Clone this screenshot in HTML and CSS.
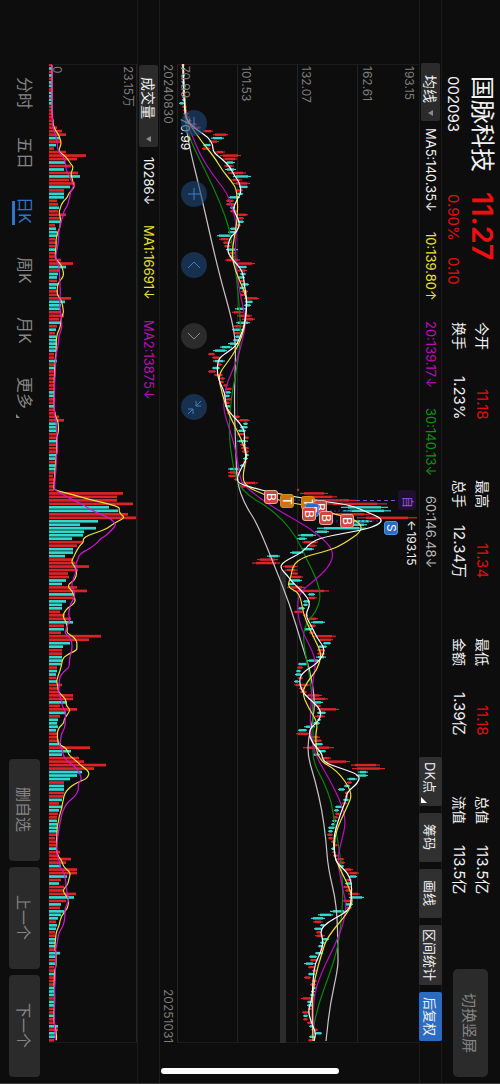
FILE: index.html
```html
<!DOCTYPE html>
<html lang="zh-CN">
	<head>
		<meta charset="UTF-8">
		<meta name="viewport" content="width=device-width, initial-scale=1">
		<title>国脉科技 002093</title>
		<link rel="stylesheet" href="styles.css">
	</head>
	<body>
		<div class="screen">
			<!--股票信息-->
			<header class="header">
				<div class="stock">
					<h1>国脉科技</h1>
					<strong class="price">11.27</strong>
					<span class="code">002093</span>
					<span class="change"><span>0.90%</span><span>0.10</span></span>
				</div>
				<div class="quotes">
					<dl><dt>今开</dt><dd class="up">11.18</dd><dt>换手</dt><dd>1.23%</dd></dl>
					<dl><dt>最高</dt><dd class="up">11.34</dd><dt>总手</dt><dd>12.34万</dd></dl>
					<dl><dt>最低</dt><dd class="up">11.18</dd><dt>金额</dt><dd>1.39亿</dd></dl>
					<dl><dt>总值</dt><dd>113.5亿</dd><dt>流值</dt><dd>113.5亿</dd></dl>
				</div>
				<button class="switch" type="button">切换竖屏</button>
			</header>

			<!--均线工具栏-->
			<div class="bar">
				<label class="pick">
					<select aria-label="主图指标"><option>均线</option></select>
				</label>
				<ul class="values">
					<li class="ma5">MA5:140.35↓</li>
					<li class="ma10">10:139.80↑</li>
					<li class="ma20">20:139.17↓</li>
					<li class="ma30">30:140.13↓</li>
					<li class="ma60">60:146.48↓</li>
				</ul>
				<div class="tools">
					<button type="button" class="more">DK点</button>
					<button type="button">筹码</button>
					<button type="button">画线</button>
					<button type="button" class="wide">区间统计</button>
					<button type="button" class="on">后复权</button>
				</div>
			</div>

			<!--K线-->
			<section class="kline">
				<div class="canvas" id="kline">
					<svg id="priceSvg" viewBox="177 64 242 979" preserveAspectRatio="none"></svg>
					<span class="scale s1">193.15</span>
					<span class="scale s2">162.61</span>
					<span class="scale s3">132.07</span>
					<span class="scale s4">101.53</span>
					<span class="scale s5">70.99</span>
					<span class="high">←193.15</span>
					<span class="low">70.99</span>
				</div>
				<div class="dates"><time>20240830</time><time>20251031</time></div>
				<div class="controls">
					<button type="button" aria-label="缩小"><svg viewBox="0 0 26 26"><path d="M13 7V19"/></svg></button>
					<button type="button" aria-label="放大"><svg viewBox="0 0 26 26"><path d="M13 7V19M7 13H19"/></svg></button>
					<button type="button" aria-label="向左"><svg viewBox="0 0 26 26"><path d="M7 16L13 10L19 16"/></svg></button>
					<button type="button" aria-label="向右" class="off"><svg viewBox="0 0 26 26"><path d="M7 10L13 16L19 10"/></svg></button>
					<button type="button" aria-label="收起"><svg viewBox="0 0 26 26"><path d="M20 7L15 12M15 7V12H20M7 20L12 15M7 15H12V20"/></svg></button>
				</div>
			</section>

			<!--成交量-->
			<div class="bar">
				<label class="pick vol">
					<select aria-label="副图指标"><option>成交量</option></select>
				</label>
				<ul class="values vol">
					<li class="ma5">10286↓</li>
					<li class="ma10">MA1:16691↓</li>
					<li class="ma20">MA2:13875↓</li>
				</ul>
			</div>
			<section class="volume">
				<svg id="volSvg" viewBox="49 64 88 979" preserveAspectRatio="none"></svg>
				<span class="scale v1">23.15万</span>
				<span class="scale v2">0</span>
			</section>

			<!--周期切换-->
			<footer class="footer">
				<nav>
					<a href="#">分时</a>
					<a href="#">五日</a>
					<a href="#" class="current">日K</a>
					<a href="#">周K</a>
					<a href="#">月K</a>
					<a href="#" class="corner">更多</a>
				</nav>
				<div class="pager">
					<button type="button">删自选</button>
					<button type="button">上一个</button>
					<button type="button">下一个</button>
				</div>
			</footer>
			<i class="home"></i>
		</div>
		<script src="chart.js"></script>
	</body>
</html>
```
FILE: styles.css
```css
* {
	margin: 0;
	padding: 0;
	box-sizing: border-box;
}

body {
	background-color: #0d0d0d;
	color: #f2f2f2;
	font-family: Inter, "Noto Sans CJK SC", sans-serif;
	font-size: 14px;
}

ul {
	list-style: none;
}

a {
	color: inherit;
	text-decoration: none;
}

button,
select {
	border: 0;
	font: inherit;
	color: inherit;
	writing-mode: inherit;
	text-orientation: inherit;
	appearance: none;
	cursor: pointer;
}

/* 横屏: 行从右往左排, 文字从上往下 */
.screen {
	position: relative;
	display: flex;
	flex-direction: column;
	width: 100%;
	height: 100vh;
	writing-mode: vertical-rl;
	text-orientation: sideways;
	white-space: nowrap;
	overflow: hidden;
	border-bottom: 1px solid #3a3a3b;
}

/* header */
.header {
	display: flex;
	width: 58px;
	padding: 76px 0 6px 0;
}

.stock {
	display: grid;
	grid-template-columns: 116px 130px;
	grid-template-rows: 36px 22px;
	align-items: center;
}

.stock h1 {
	font-size: 24px;
	font-weight: 400;
	line-height: 34px;
}

.price {
	color: #f00f0f;
	font-size: 29px;
	font-weight: 600;
	line-height: 34px;
}

.code,
.change {
	font-size: 15px;
	line-height: 22px;
}

.change {
	display: flex;
	gap: 16px;
	padding-top: 2px;
	color: #e01010;
}

.quotes {
	display: flex;
	gap: 60px;
	padding-right: 6px;
}

.quotes dl {
	display: grid;
	grid-template-columns: 28px 70px;
	grid-template-rows: 23px 23px;
	line-height: 23px;
}

.quotes dd {
	font-size: 15px;
	text-align: right;
}

.quotes .up {
	color: #e01010;
}

.switch {
	width: 35px;
	height: 108px;
	margin: auto 12px 0 0;
	border-radius: 5px;
	background-color: #2b2b2c;
	color: #868686;
	font-size: 15px;
}

/* 工具栏 */
.bar {
	display: flex;
	align-items: center;
	width: 23px;
	padding: 63px 0 42px;
	border-left: 1px solid #1b1b1b;
	border-right: 1px solid #1b1b1b;
}

.pick {
	position: relative;
	width: 19px;
	height: 58px;
	flex: none;
}

.pick select {
	width: 100%;
	height: 100%;
	padding-top: 12px;
	border-radius: 2px;
	background-color: #2b2b2c;
	line-height: 19px;
}

.pick::after {
	content: "";
	position: absolute;
	bottom: 5px;
	left: 7px;
	border: 3px solid transparent;
	border-left-width: 0;
	border-right: 5px solid #8a8a8a;
}

.pick.vol {
	height: 82px;
	margin-top: 2px;
}

.values {
	display: flex;
	gap: 20px;
	margin-top: 7px;
	font-size: 13px;
	line-height: 21px;
}

.values.vol {
	margin-top: 10px;
}

.ma5 {
	color: #f2f2f2;
}

.ma10 {
	color: #e8e337;
}

.ma20 {
	color: #b80fb8;
}

.ma30 {
	color: #0c930c;
}

.ma60 {
	color: #b9b9b9;
}

.tools {
	display: flex;
	gap: 7px;
	margin-top: auto;
}

.tools button {
	position: relative;
	width: 23px;
	height: 49px;
	border-radius: 2px;
	background-color: #303031;
	font-size: 13px;
}

.tools .wide {
	height: 60px;
}

.tools .on {
	background-color: #2b6cc0;
}

.tools .more {
	padding-bottom: 8px;
}

.tools .more::after {
	content: "";
	position: absolute;
	left: 2px;
	bottom: 3px;
	border-left: 6px solid #fff;
	border-top: 6px solid transparent;
}

/* K线图 */
.kline {
	position: relative;
	display: flex;
	flex-direction: column;
	flex: 1;
	padding: 64px 0 40px;
}

.canvas {
	position: relative;
	flex: 1;
}

.canvas svg,
.volume svg {
	display: block;
	width: 100%;
	height: 100%;
}

.scale {
	position: absolute;
	top: 2px;
	color: #7d7d7d;
	font-size: 12px;
	line-height: 16px;
}

.s1 {
	right: 2px;
}

.s2 {
	left: 75%;
}

.s3 {
	left: 50%;
}

.s4 {
	left: 25%;
}

.s5 {
	left: 0;
}

.high,
.low {
	position: absolute;
	font-size: 12px;
	line-height: 16px;
}

.high {
	top: 456px;
	right: 0;
}

.low {
	top: 54px;
	left: 0;
}

.dates {
	display: flex;
	justify-content: space-between;
	width: 17px;
	color: #7d7d7d;
	font-size: 12px;
	line-height: 17px;
}

.controls {
	position: absolute;
	top: 110px;
	left: 21px;
	display: flex;
	gap: 45px;
}

.controls button {
	width: 26px;
	height: 26px;
	border-radius: 50%;
	background-color: rgba(29, 72, 122, .6);
	color: #3f7fc9;
}

.controls .off {
	background-color: #2b2b2c;
	color: #8a8a8a;
}

.controls svg {
	display: block;
	fill: none;
	stroke: currentColor;
}

/* 买卖点 */
.mark {
	position: absolute;
	width: 14px;
	height: 14px;
	border: 1px solid #f0a89a;
	border-radius: 3px;
	background-color: #d0453f;
	color: #fff;
	font-size: 12px;
	line-height: 12px;
	text-align: center;
}

.mark.t {
	border-color: #d98a1d;
	background-color: #c8770c;
}

.mark.s {
	border-color: #4f93e0;
	background-color: #2b6cc0;
}

.mark.own {
	width: 18px;
	height: 20px;
	border: 0;
	background-color: #1f1030;
	color: #9650e0;
	line-height: 18px;
	padding-top: 4px;
}

/* 成交量图 */
.volume {
	position: relative;
	width: 88px;
	padding: 64px 0 40px;
}

.volume .scale {
	top: 66px;
}

.v1 {
	right: 1px;
}

.v2 {
	left: 0;
}

/* footer */
.footer {
	display: flex;
	justify-content: space-between;
	width: 49px;
	padding: 77px 9px 6px;
}

nav {
	display: flex;
	gap: 28px;
	color: #868686;
	font-size: 16px;
	line-height: 31px;
}

nav a {
	position: relative;
	min-height: 32px;
}

nav .current {
	color: #2f74c8;
}

nav .current::after {
	content: "";
	position: absolute;
	left: 3px;
	top: 4px;
	bottom: 4px;
	width: 3px;
	background-color: #2f74c8;
}

nav .corner::after {
	content: "";
	position: absolute;
	left: 7px;
	bottom: -9px;
	border-left: 4px solid #868686;
	border-top: 4px solid transparent;
}

.pager {
	display: flex;
	gap: 6px;
}

.pager button {
	width: 31px;
	height: 102px;
	border-radius: 4px;
	background-color: #2b2b2c;
	color: #868686;
	font-size: 15px;
}

.home {
	position: absolute;
	bottom: 9px;
	left: 50%;
	width: 178px;
	height: 6px;
	margin-left: -89px;
	border-radius: 3px;
	background-color: #fff;
}
```
FILE: chart.js
```js
var RED = "#dc2428";
var CYAN = "#35d6ce";
var TOP = 65;
var STEP = 3.483;

//涨跌 + 成交量, 每天一根
var days = ("r3 c3 r3 c3 r3 c3 c3 r3 c3 c3 c3 c3 r3 r3 r4 r4 r5 r5 r8 r13 r17 c11 r11 c7 r5 r17 r37 r28 c16 r22 " +
	"c15 r29 c31 r20 r26 c21 r15 c15 c15 r8 r9 c10 r9 r17 r12 c11 r6 c7 c8 c8 r6 r7 r6 c7 r6 r6 r12 r24 c17 r11 " +
	"c9 c8 r8 c9 c7 r9 r9 r22 c16 c12 c11 r12 r15 r10 c11 r8 c7 r6 c7 c8 c8 c7 c7 r5 r5 c8 r5 c5 r5 r6 " +
	"r5 r6 r5 r5 c5 c5 r6 r5 c5 r6 r7 r10 r15 c8 c7 c7 r7 r9 c9 r7 r7 r7 c7 c6 r6 c6 c6 r6 r4 r5 " +
	"r5 r5 r5 r74 r68 r68 r84 c60 c69 r79 r87 c49 c31 c47 c35 c34 c23 r34 r28 c24 c24 c16 r24 r26 r40 r29 r19 r20 c17 c13 " +
	"r28 r38 c25 r24 c17 c13 c13 r11 r16 r22 c24 r15 c15 r12 r52 r40 c21 c14 r13 r13 c13 c13 c12 r8 c8 c7 r7 c8 r13 r10 " +
	"r10 r24 r24 c18 r11 r28 c17 r11 c9 c8 c9 c7 r9 r9 r10 c12 r41 c22 c13 r30 r35 r57 r45 c33 c28 c21 r15 c15 c15 r15 " +
	"r14 c13 r10 c13 c10 r9 r8 c8 c8 c8 c8 r8 r6 r8 r8 c7 r11 r10 r22 r17 c12 r28 r28 c18 r12 c10 r15 r15 r27 c25 " +
	"r17 c12 r11 c15 c12 c9 r7 c8 c7 r6 r6 c6 c6 c6 r6 c11 c6 r6 c6 r5 r5 c6 r5 r5 r5 c6 c6 c6 r5 c5 " +
	"c5 r5 r5 c5 r5 r6 c9 r9 c7 c7 r5").split(" ");

//最低-最高
var ranges = ("181-185 181-185 182-185 182-185 181-185 182-185 182-186 181-185 182-185 182-185 182-186 179-184 182-187 183-187 183-189 184-190 185-192 188-197 192-201 203-213 " +
	"213-228 211-224 209-219 203-211 202-210 215-225 220-241 223-237 225-235 224-234 225-236 228-246 233-251 231-242 233-250 239-248 236-243 237-243 228-240 226-234 " +
	"226-235 230-235 230-237 237-248 237-244 238-244 236-241 230-238 228-236 217-232 219-230 223-231 224-231 226-238 229-236 229-235 225-240 235-255 238-247 237-247 " +
	"240-246 238-245 240-245 241-249 239-245 241-248 240-246 244-259 245-253 244-251 235-246 232-243 237-252 242-255 236-250 233-243 232-242 234-241 235-241 233-240 " +
	"228-238 220-232 213-227 208-215 212-220 213-225 217-222 212-220 208-216 214-223 220-225 220-224 223-228 225-232 225-231 224-230 226-232 225-230 225-231 226-230 " +
	"227-232 232-240 238-250 243-248 240-248 238-246 237-245 243-249 237-248 240-246 241-249 242-249 245-249 243-248 243-247 240-245 228-240 228-239 228-236 234-239 " +
	"241-258 240-246 297-299 300-328 302-337 307-356 323-387 341-388 343-391 330-370 357-417 350-372 348-367 317-366 315-329 298-316 297-307 302-318 307-317 302-314 " +
	"290-303 267-280 257-278 252-280 283-297 285-297 292-298 290-303 289-302 288-295 287-305 293-329 308-315 307-317 303-310 303-308 298-305 294-303 303-308 307-318 " +
	"311-325 309-316 304-313 309-315 312-336 318-333 323-331 318-327 317-325 317-325 316-326 307-320 298-307 297-303 296-301 295-302 298-303 294-299 294-310 299-305 " +
	"300-307 305-322 308-328 313-323 315-321 317-339 317-326 315-325 317-321 313-320 304-315 298-307 296-310 308-320 313-322 315-323 303-334 318-326 313-320 320-331 " +
	"322-350 351-380 352-385 358-368 356-368 347-357 347-352 344-350 338-345 345-348 345-348 343-349 342-347 335-343 334-339 335-340 333-338 332-337 331-335 328-335 " +
	"328-333 327-333 328-333 331-336 333-338 331-335 332-336 333-338 337-344 338-345 338-344 343-353 348-359 349-357 346-352 345-352 342-352 345-352 348-360 349-364 " +
	"342-352 345-353 346-352 330-347 318-333 311-325 313-323 320-325 314-322 316-321 315-325 322-329 320-325 318-323 320-323 315-323 309-317 310-318 304-315 308-315 " +
	"312-317 308-315 304-311 312-317 310-316 312-316 311-315 310-315 301-313 307-313 307-313 308-312 302-310 303-308 303-308 307-313 309-314 311-318 315-322 309-315 308-313").split(" ");

var lines = {
	"#c9c3c9": "183,64 185,120 190,150 200,190 218,270 233,323 236,350 234,400 236,455 237,483 245,505 257,523 275,567 290,605 302,645 310,670 315,700 313,720 308,740 308,757 315,780 322,810 326,840 328,868 337,905 338,955 338,968 330,1005 326,1041",
	"#0c830c": "183,64 185,120 190,140 205,170 220,202 230,230 235,263 239,303 241,333 238,363 233,387 230,410 229,435 232,460 237,483 250,497 265,505 283,520 297,538 307,560 317,580 321,597 316,612 305,625 303,640 308,667 312,693 313,720 313,740 313,762 323,780 332,803 335,827 340,853 343,887 342,915 338,947 330,973 318,1005 312,1035",
	"#b80fb8": "183,64 185,118 192,135 200,155 213,175 227,193 231,205 237,223 235,250 238,283 243,307 246,323 242,343 236,363 228,380 225,393 223,410 230,430 237,455 240,480 247,488 265,502 283,513 308,527 328,543 334,555 328,568 315,580 300,592 297,605 300,627 312,650 316,663 313,680 311,700 310,727 313,747 318,760 330,780 342,805 346,823 341,843 337,860 343,890 347,908 340,935 320,975 313,1000 314,1035",
	"#f0e040": "183,64 185,117 190,125 202,142 215,158 222,170 232,182 237,190 238,217 232,250 233,263 238,277 245,293 247,303 245,327 238,347 227,363 218,375 222,393 228,413 242,440 247,457 242,478 247,487 263,494 283,502 307,505 337,515 353,518 365,529 342,545 327,551 303,557 293,565 291,577 287,587 300,593 303,613 310,630 320,650 321,657 317,670 307,682 302,693 308,707 318,723 315,737 318,760 337,770 353,793 347,807 335,833 334,853 337,863 352,893 352,908 327,937 322,953 314,980 312,1007 313,1041",
	"#ffffff": "183,64 184,113 188,122 197,130 208,137 213,145 213,152 222,159 230,167 234,175 240,183 241,193 238,198 233,208 236,215 240,223 237,232 230,237 227,250 231,258 236,263 243,272 244,283 247,300 246,313 244,327 239,340 235,347 223,355 218,360 217,373 220,383 225,393 226,407 230,413 240,423 245,432 244,443 247,458 243,465 237,477 238,483 250,487 273,493 327,502 350,505 367,512 383,519 378,525 363,530 323,537 310,543 303,552 283,562 280,568 287,575 293,583 303,592 311,603 305,615 312,627 317,638 326,650 318,663 303,672 299,680 302,692 313,702 321,710 320,720 308,730 312,743 322,753 323,762 340,768 360,775 358,783 347,792 346,800 340,815 333,838 335,857 337,863 347,872 352,883 351,900 350,908 343,914 328,922 320,930 323,940 322,950 315,963 313,980 312,1000 308,1010 311,1022 316,1033 314,1041"
};

//买卖点: 文字, 类名, x, y
var marks = [
	["自", "own", 408, 500], ["B", "", 271, 497], ["T", "t", 287, 501], ["T", "t", 308, 503], ["B", "", 320, 507],
	["B", "s", 312, 510], ["B", "", 309, 514], ["B", "", 326, 518], ["B", "", 347, 521], ["S", "s", 391, 528]
];

function bar(x1, x2, y, h, color) {
	return '<rect x="' + x1 + '" y="' + (y - h / 2).toFixed(2) + '" width="' + (x2 - x1) + '" height="' + h + '" fill="' + color + '"/>';
}

//过各点中点的平滑曲线
function curve(pts, color) {
	var d = "M" + pts[0];
	for (var i = 1; i < pts.length - 1; i++) {
		var mx = (pts[i][0] + pts[i + 1][0]) / 2;
		var my = (pts[i][1] + pts[i + 1][1]) / 2;
		d += "Q" + pts[i] + " " + mx.toFixed(1) + "," + my.toFixed(1);
	}
	d += "L" + pts[pts.length - 1];
	return '<path d="' + d + '" fill="none" stroke="' + color + '" stroke-width="1.2"/>';
}

function frame(xs) {
	var html = "";
	xs.forEach(function(x) {
		html += '<path d="M' + x + ' 64V1043" stroke="#242424"/>';
	});
	return html + '<path d="M49 64.5H419M49 1042.5H419" stroke="#1c1c1c"/>';
}

function drawPrice() {
	var html = frame([177.5, 237.5, 297.5, 357.5]);
	html += '<rect x="280" y="570" width="6" height="473" fill="#2c2c2c"/>';
	ranges.forEach(function(r, i) {
		var p = r.split("-").map(Number);
		var color = days[i][0] == "r" ? RED : CYAN;
		var pad = Math.round((p[1] - p[0]) * 0.15);
		var y = TOP + STEP * i;
		html += bar(p[0], p[1], y, 1.2, color);
		html += bar(p[0] + pad, p[1] - pad, y, 2.4, color);
	});
	html += '<path d="M356 500.5H398" stroke="#8a4fd0" stroke-dasharray="4 3"/>';
	html += '<path d="M290 500H345M318 511H352M332 521H384" stroke="#3a3f8f" stroke-dasharray="2 2"/>';
	for (var color in lines) {
		html += curve(lines[color].split(" ").map(function(s) {
			return s.split(",").map(Number);
		}), color);
	}
	document.getElementById("priceSvg").innerHTML = html;
}

function average(n) {
	return days.map(function(d, i) {
		var from = Math.max(0, i - n + 1);
		var sum = 0;
		for (var k = from; k <= i; k++) {
			sum += Number(days[k].slice(1));
		}
		return [49 + sum / (i - from + 1), TOP + STEP * i];
	});
}

function drawVolume() {
	var html = frame([136.5]);
	days.forEach(function(d, i) {
		html += bar(49, 49 + Number(d.slice(1)), TOP + STEP * i, 2.7, d[0] == "r" ? RED : CYAN);
	});
	html += curve(average(5), "#f0e040") + curve(average(10), "#d814d8");
	document.getElementById("volSvg").innerHTML = html;
}

function drawMarks() {
	var box = document.getElementById("kline");
	marks.forEach(function(m) {
		var el = document.createElement("span");
		var half = m[1] == "own" ? 10 : 7;
		el.className = "mark " + m[1];
		el.textContent = m[0];
		el.style.left = (m[2] - half - 177) / 242 * 100 + "%";
		el.style.top = (m[3] - half - 64) / 979 * 100 + "%";
		box.appendChild(el);
	});
}

drawPrice();
drawVolume();
drawMarks();
```
